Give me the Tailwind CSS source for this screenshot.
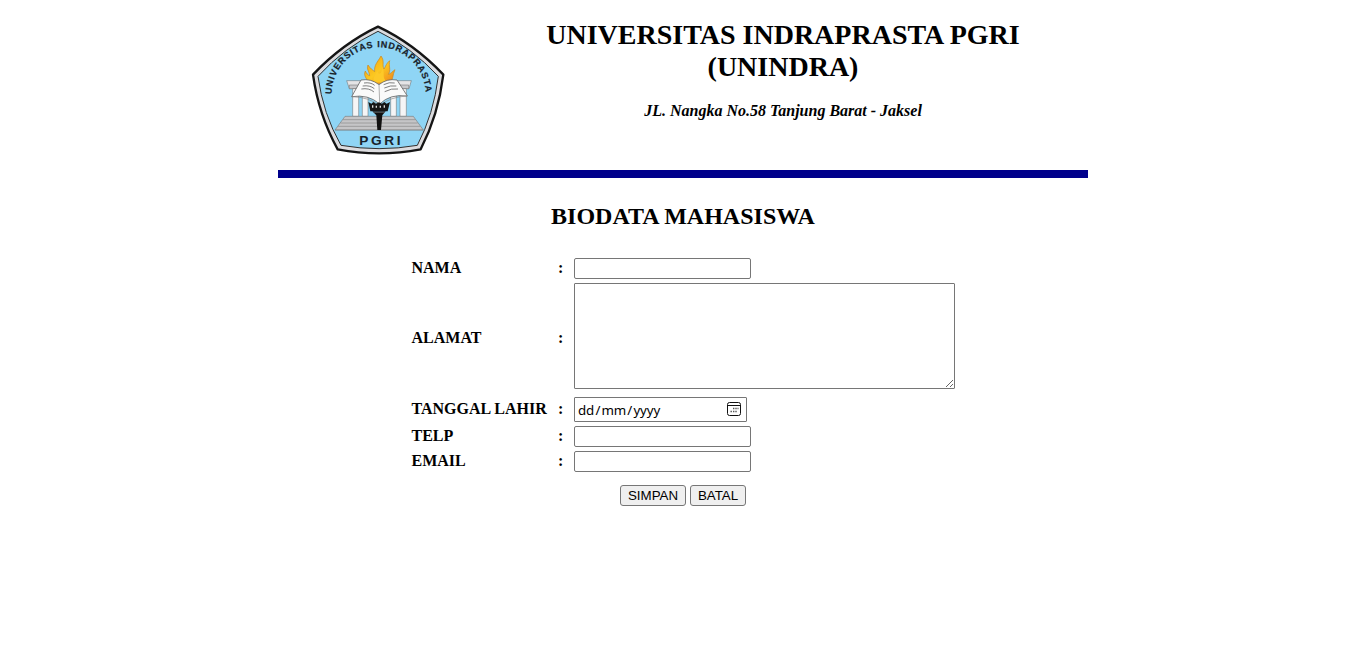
<!DOCTYPE html>
<html lang="id">
<head>
<meta charset="utf-8">
<title>Biodata Mahasiswa</title>
<script src="https://cdn.jsdelivr.net/npm/@tailwindcss/browser@4"></script>
</head>
<body class="bg-white text-black font-['Liberation_Serif',serif]">
<main class="mx-auto w-[810px] pt-[15px]">
  <header class="flex h-[155px]">
    <svg class="ml-[22px] h-[150px] w-[160px] shrink-0" viewBox="0 0 480 450" role="img" aria-label="Logo UNINDRA">
      <defs>
        <path id="arc" d="M95 238A141 141 0 0 1 377 238"/>
        <linearGradient id="fire" x1="0" x2="1" y1="0" y2="1"><stop offset="0" stop-color="#f59a12"/><stop offset=".5" stop-color="#fbc820"/><stop offset="1" stop-color="#ee7d1b"/></linearGradient>
      </defs>
      <path d="M234 35Q342 86 430 179Q415 300 362 403Q237 427 113 403Q56 300 39 179Q127 86 234 35Z" fill="#dcdcdf" stroke="#151515" stroke-width="7" stroke-linejoin="round"/>
      <path d="M234 49Q335 97 415 184Q401 297 352 391Q237 411 123 391Q69 297 54 184Q133 97 234 49Z" fill="#8fd5f5" stroke="#303030" stroke-width="3"/>
      <g stroke="#666" stroke-width="1.5" fill="#e4e4e6">
        <path d="M140 197H334L327 221H148Z"/>
        <path d="M148 210H326V221H148Z" fill="#c9c9cc"/>
        <path d="M158 221H176V304H158ZM187 232H204V304H187ZM272 232H289V304H272ZM300 221H319V304H300Z" fill="#f5f5f6"/>
        <path d="M135 304H340L370 345H105Z" fill="#c5c5c7"/>
        <path d="M129 314H346M122 324H353M114 334H361M105 345H370" fill="none" stroke="#888" stroke-width="2"/>
      </g>
      <path d="M207 206C201 190 189 183 196 168C200 177 204 180 209 182C207 168 199 162 204 150C211 161 217 164 224 170C222 149 232 143 243 123C255 139 245 150 252 162C258 153 258 146 269 137C265 152 274 166 265 178C273 176 277 169 285 164C277 181 280 195 269 206Z" fill="url(#fire)" stroke="#c9851b" stroke-width="2"/>
      <path d="M222 202C217 187 226 181 232 167C235 181 246 179 246 155C256 175 247 184 255 194L260 202Z" fill="#fdc928"/>
      <path d="M155 245L183 195Q213 190 237 209Q260 190 291 195L322 243Q270 236 239 267Q205 237 155 245Z" fill="#fafafa" stroke="#666" stroke-width="2.5" stroke-linejoin="round"/>
      <path d="M237 209L239 262M155 245Q207 246 239 272Q271 245 322 243" fill="none" stroke="#888" stroke-width="2"/>
      <path d="M192 204Q212 201 224 211M188 213Q210 210 223 221M184 222Q207 218 222 231M251 209Q268 200 284 204M253 219Q272 210 289 213M254 230Q275 219 294 222" fill="none" stroke="#666" stroke-width="2.5"/>
      <path d="M205 261L214 266L220 261L228 266L237 262L246 266L253 261L260 266L270 261L263 289H211Z" fill="#161616"/>
      <path d="M218 271V278M229 272V278M241 272V278M253 271V278" stroke="#ddd" stroke-width="4"/>
      <path d="M217 289H257L247 301L243 345H232L229 301Z" fill="#111"/>
      <path d="M219 292H255" stroke="#777" stroke-width="2"/>
      <text class="font-['Liberation_Sans',sans-serif] font-bold" font-size="27" fill="#18232b" stroke="#18232b" stroke-width=".6"><textPath href="#arc" textLength="436">UNIVERSITAS INDRAPRASTA</textPath></text>
      <text class="font-['Liberation_Sans',sans-serif] font-bold" x="178" y="391" font-size="41" fill="#18232b" textLength="124">PGRI</text>
    </svg>
    <div class="ml-[18px] w-[610px] pt-[4px] text-center">
      <h1 class="text-[28px] leading-[32px] font-bold">UNIVERSITAS INDRAPRASTA PGRI<br>(UNINDRA)</h1>
      <p class="mt-[19px] text-[16px] leading-[18px] font-bold italic">JL. Nangka No.58 Tanjung Barat - Jaksel</p>
    </div>
  </header>
  <div class="h-2 bg-[#00008b]"></div>
  <h2 class="mt-6 text-center text-[24px] leading-[28px] font-bold">BIODATA MAHASISWA</h2>
  <form>
    <div class="mt-7 ml-[134px] grid grid-cols-[146px_16px_381px] items-center gap-y-1 text-[16px] leading-[18px] font-bold">
      <label for="nama" class="-ml-[0.5px] pb-px">NAMA</label><span class="pb-px">:</span>
      <input id="nama" class="h-[21px] w-[177px] rounded-[2px] border border-[#767676] px-0.5">
      <label for="alamat" class="-ml-[0.5px]">ALAMAT</label><span>:</span>
      <div class="h-[110px]"><textarea id="alamat" class="block h-[106px] w-[381px] resize rounded-[1px] border border-[#767676] p-0.5"></textarea></div>
      <label for="tgl" class="-ml-[0.5px] pb-px">TANGGAL LAHIR</label><span class="pb-px">:</span>
      <div id="tgl" class="flex h-[25px] w-[173px] items-center justify-between rounded-[1px] border border-[#767676] pr-[5px] pl-[3px] font-['Noto_Sans',sans-serif] text-[13.33px] font-normal">
        <span class="flex pt-px tracking-[-0.1px]"><span>dd</span><span class="px-[1.2px]">/</span><span>mm</span><span class="px-[1.2px]">/</span><span>yyyy</span></span>
        <svg class="mb-0.5 h-[14px] w-[14px]" viewBox="0 0 14 14" fill="none" stroke="#111"><rect x=".5" y=".5" width="13" height="13" rx="2"/><path d="M.5 3.5H13.5"/><path d="M6 6.5h1.4M8.3 6.5h1.4M10.5 6.5h1M3.5 9.5h1.4M6 9.5h1.4M8.3 9.5h1.4" stroke="#555" stroke-width="1.4"/></svg>
      </div>
      <label for="telp" class="-ml-[0.5px] pb-px">TELP</label><span class="pb-px">:</span>
      <input id="telp" class="h-[21px] w-[177px] rounded-[2px] border border-[#767676] px-0.5">
      <label for="email" class="-ml-[0.5px] pb-px">EMAIL</label><span class="pb-px">:</span>
      <input id="email" class="h-[21px] w-[177px] rounded-[2px] border border-[#767676] px-0.5">
    </div>
    <div class="mt-[13px] flex justify-center gap-1 font-['Liberation_Sans',sans-serif] text-[13.333px] leading-[15px]">
      <button type="button" class="h-[21px] w-[66px] rounded-[3px] border border-[#767676] bg-[#efefef]">SIMPAN</button>
      <button type="button" class="h-[21px] w-[56px] rounded-[3px] border border-[#767676] bg-[#efefef]">BATAL</button>
    </div>
  </form>
</main>
</body>
</html>
